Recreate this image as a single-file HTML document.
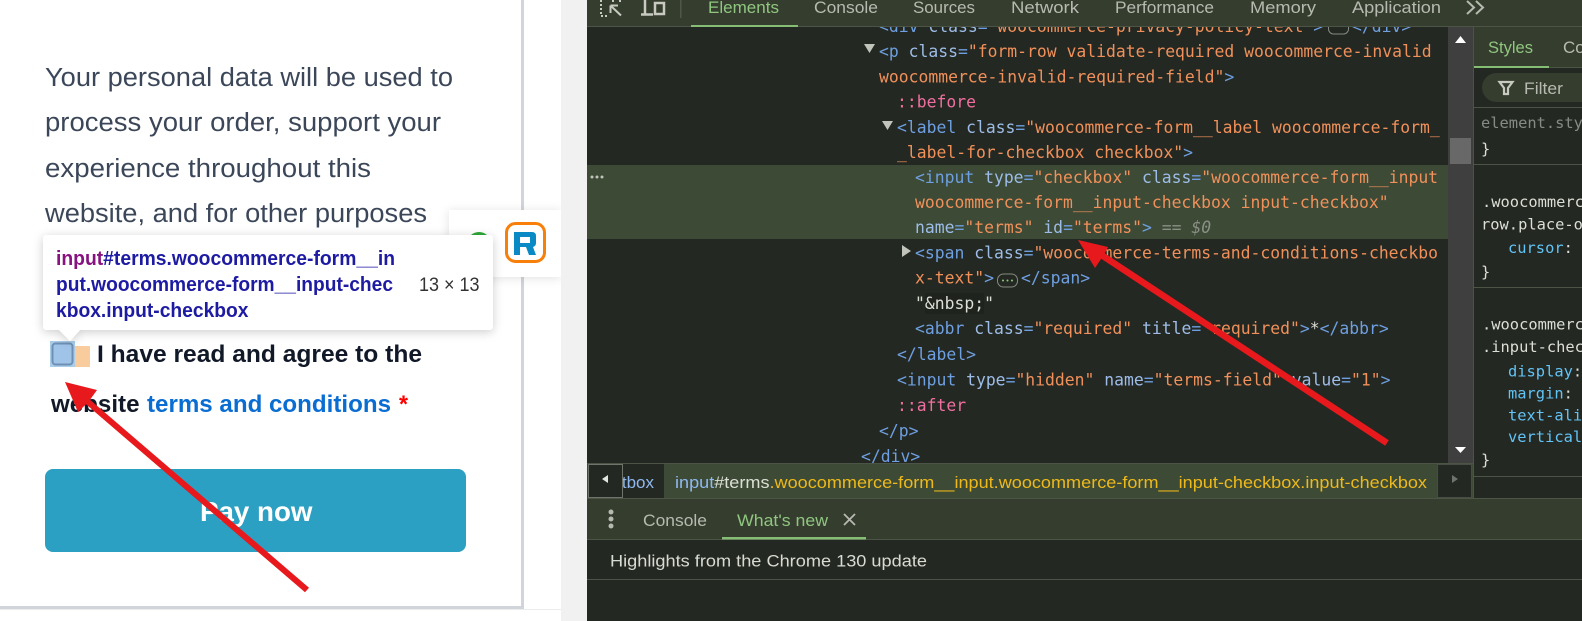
<!DOCTYPE html>
<html><head><meta charset="utf-8"><style>
html,body{margin:0;padding:0;background:#fff;width:1582px;height:621px;overflow:hidden}
svg{display:block}
text{white-space:pre}
.s{font-family:"Liberation Sans",sans-serif}
.m{font-family:"DejaVu Sans Mono","Liberation Mono",monospace;font-size:16.4px}
.y{font-family:"DejaVu Sans Mono","Liberation Mono",monospace;font-size:15.4px}
.t{fill:#6e9fe0}.a{fill:#9dbde8}.v{fill:#f0905a}.p{fill:#ee6f9f}.w{fill:#dcdfd6}.q{fill:#b6bab0}.g{fill:#90c680}
.o{fill:#62c3f5}
</style></head><body>
<svg width="1582" height="621" viewBox="0 0 1582 621" xmlns="http://www.w3.org/2000/svg">
<defs>
<filter id="sh" x="-20%" y="-30%" width="140%" height="160%"><feDropShadow dx="0" dy="2" stdDeviation="5" flood-color="#000" flood-opacity=".2"/></filter>
<filter id="sh2" x="-20%" y="-30%" width="140%" height="160%"><feDropShadow dx="0" dy="1" stdDeviation="5" flood-color="#000" flood-opacity=".12"/></filter>
</defs>
<rect width="1582" height="621" fill="#fff"/>
<!-- left page -->
<rect x="521" y="0" width="3" height="609" fill="#d1d5db"/>
<rect x="0" y="606" width="524" height="3" fill="#d1d5db"/>
<rect x="0" y="609" width="561" height="1" fill="#ececec"/>
<rect x="561" y="0" width="26" height="621" fill="#f1f1f1"/>
<g class="s" font-size="25.5" fill="#3b4759">
<text x="45" y="86" textLength="408" lengthAdjust="spacingAndGlyphs">Your personal data will be used to</text>
<text x="45" y="131" textLength="396" lengthAdjust="spacingAndGlyphs">process your order, support your</text>
<text x="45" y="177" textLength="326" lengthAdjust="spacingAndGlyphs">experience throughout this</text>
<text x="45" y="222" textLength="382" lengthAdjust="spacingAndGlyphs">website, and for other purposes</text>
</g>
<!-- widget -->
<rect x="449" y="210" width="112" height="67" fill="#fff" filter="url(#sh2)"/>
<rect x="561" y="200" width="26" height="90" fill="#f1f1f1"/>
<circle cx="479" cy="244" r="12" fill="#2fa836"/>
<rect x="506.5" y="223.5" width="38" height="38" rx="9" fill="#fff" stroke="#f77f0a" stroke-width="3"/>
<path d="M514 232H532Q536 232 536 236V243Q536 246 533 247L536 255H529L526 247H520V255H514ZM520 237V243H530V237Z" fill="#0a8ac4"/>
<!-- form -->
<rect x="50" y="341" width="25" height="26" fill="#a9cde8"/>
<rect x="75" y="346" width="15" height="21" fill="#f9cc9d"/>
<rect x="52.5" y="343.5" width="20" height="21" rx="3" fill="#a0c4e8" stroke="#6f90b5" stroke-width="2"/>
<g class="s" font-size="24.5" font-weight="700">
<text x="97" y="362" fill="#111827" textLength="325" lengthAdjust="spacingAndGlyphs">I have read and agree to the</text>
<text x="51" y="412" fill="#111827" textLength="88.5" lengthAdjust="spacingAndGlyphs">website</text>
<text x="147" y="412" fill="#0a6dd1" textLength="244" lengthAdjust="spacingAndGlyphs">terms and conditions</text>
<text x="399" y="412" fill="#f00" textLength="9" lengthAdjust="spacingAndGlyphs">*</text>
</g>
<rect x="45" y="469" width="421" height="83" rx="8" fill="#2ba0c2"/>
<text class="s" x="200" y="521" font-size="28" font-weight="700" fill="#fff" textLength="112.5" lengthAdjust="spacingAndGlyphs">Pay now</text>
<!-- tooltip -->
<g filter="url(#sh)">
<path d="M47 235H489Q493 235 493 239V326Q493 330 489 330H80L70 341L59 330H47Q43 330 43 326V239Q43 235 47 235Z" fill="#fff"/>
</g>
<g class="s" font-size="20" font-weight="700" fill="#1e1ba3">
<text x="56" y="265" textLength="339" lengthAdjust="spacingAndGlyphs"><tspan fill="#881280">input</tspan>#terms.woocommerce-form__in</text>
<text x="56" y="291" textLength="337" lengthAdjust="spacingAndGlyphs">put.woocommerce-form__input-chec</text>
<text x="56" y="317" textLength="192.5" lengthAdjust="spacingAndGlyphs">kbox.input-checkbox</text>
</g>
<text class="s" x="419" y="291" font-size="19" fill="#333" textLength="60.5" lengthAdjust="spacingAndGlyphs">13 × 13</text>

<!-- devtools -->
<rect x="587" y="0" width="995" height="621" fill="#242822"/>
<rect x="587" y="165" width="861" height="74" fill="#3c4a36"/>
<rect x="925" y="293" width="59" height="21" fill="#1f231e"/>
<g class="m">
<text x="879" y="32"><tspan class="t">&lt;div </tspan><tspan class="a">class</tspan><tspan class="t">=</tspan><tspan class="v">"woocommerce-privacy-policy-text"</tspan><tspan class="t">&gt;</tspan></text>
<rect x="1328.5" y="22" width="20" height="12" rx="5" fill="none" stroke="#858a80"/>
<text x="1352" y="32" class="t">&lt;/div&gt;</text>
<text x="879" y="57"><tspan class="t">&lt;p </tspan><tspan class="a">class</tspan><tspan class="t">=</tspan><tspan class="v">"form-row validate-required woocommerce-invalid</tspan></text>
<text x="879" y="82.3"><tspan class="v">woocommerce-invalid-required-field"</tspan><tspan class="t">&gt;</tspan></text>
<text x="897" y="107.6" class="p">::before</text>
<text x="897" y="132.9"><tspan class="t">&lt;label </tspan><tspan class="a">class</tspan><tspan class="t">=</tspan><tspan class="v">"woocommerce-form__label woocommerce-form_</tspan></text>
<text x="897" y="158.2"><tspan class="v">_label-for-checkbox checkbox"</tspan><tspan class="t">&gt;</tspan></text>
<text x="915" y="183"><tspan class="t">&lt;input </tspan><tspan class="a">type</tspan><tspan class="t">=</tspan><tspan class="v">"checkbox"</tspan> <tspan class="a">class</tspan><tspan class="t">=</tspan><tspan class="v">"woocommerce-form__input</tspan></text>
<text x="915" y="208"><tspan class="v">woocommerce-form__input-checkbox input-checkbox"</tspan></text>
<text x="915" y="233"><tspan class="a">name</tspan><tspan class="t">=</tspan><tspan class="v">"terms"</tspan> <tspan class="a">id</tspan><tspan class="t">=</tspan><tspan class="v">"terms"</tspan><tspan class="t">&gt;</tspan><tspan fill="#8b9086"> == </tspan><tspan fill="#8b9086" font-style="italic">$0</tspan></text>
<text x="915" y="258.5"><tspan class="t">&lt;span </tspan><tspan class="a">class</tspan><tspan class="t">=</tspan><tspan class="v">"woocommerce-terms-and-conditions-checkbo</tspan></text>
<text x="915" y="283.5"><tspan class="v">x-text"</tspan><tspan class="t">&gt;</tspan></text>
<rect x="997.5" y="274" width="20" height="13" rx="6" fill="none" stroke="#858a80"/>
<circle cx="1003" cy="280.5" r="1" fill="#90c680"/><circle cx="1007.5" cy="280.5" r="1" fill="#90c680"/><circle cx="1012" cy="280.5" r="1" fill="#90c680"/>
<text x="1021" y="283.5" class="t">&lt;/span&gt;</text>
<text x="915" y="308.8" class="w">"&amp;nbsp;"</text>
<text x="915" y="334.2"><tspan class="t">&lt;abbr </tspan><tspan class="a">class</tspan><tspan class="t">=</tspan><tspan class="v">"required"</tspan> <tspan class="a">title</tspan><tspan class="t">=</tspan><tspan class="v">"required"</tspan><tspan class="t">&gt;</tspan><tspan class="w">*</tspan><tspan class="t">&lt;/abbr&gt;</tspan></text>
<text x="897" y="360" class="t">&lt;/label&gt;</text>
<text x="897" y="385.5"><tspan class="t">&lt;input </tspan><tspan class="a">type</tspan><tspan class="t">=</tspan><tspan class="v">"hidden"</tspan> <tspan class="a">name</tspan><tspan class="t">=</tspan><tspan class="v">"terms-field"</tspan> <tspan class="a">value</tspan><tspan class="t">=</tspan><tspan class="v">"1"</tspan><tspan class="t">&gt;</tspan></text>
<text x="897" y="411" class="p">::after</text>
<text x="879" y="436.5" class="t">&lt;/p&gt;</text>
<text x="861" y="462" class="t">&lt;/div&gt;</text>
</g>
<path d="M864 44H875L869.5 53Z M882 121H893L887.5 130Z M902 245L911 251L902 257Z" fill="#c0c4ba"/>
<circle cx="592" cy="177" r="1.5" fill="#c0c4ba"/><circle cx="597" cy="177" r="1.5" fill="#c0c4ba"/><circle cx="602" cy="177" r="1.5" fill="#c0c4ba"/>
<!-- top bar -->
<rect x="587" y="0" width="995" height="26" fill="#353d2e"/>
<rect x="587" y="26" width="995" height="1" fill="#4c5445"/>
<rect x="691" y="25" width="107" height="2" fill="#86bd75"/>
<g fill="none" stroke="#c6cac0">
<path d="M601 0V16H609M612 1H616M619 1H622" stroke-width="2" stroke-dasharray="2 2"/>
<path d="M610.5 5.5H618M610.5 5.5V13M611 6L621 15.5" stroke-width="2"/>
<path d="M645 0V14M641 14.5H653" stroke-width="2.5"/>
<rect x="655" y="3" width="9" height="11" stroke-width="2.5"/>
</g>
<rect x="680" y="0" width="1.5" height="18" fill="#4f5749"/>
<g class="s" font-size="17">
<text x="708" y="13" class="g" textLength="71" lengthAdjust="spacingAndGlyphs">Elements</text>
<text x="814" y="13" class="q" textLength="64" lengthAdjust="spacingAndGlyphs">Console</text>
<text x="913" y="13" class="q" textLength="62" lengthAdjust="spacingAndGlyphs">Sources</text>
<text x="1011" y="13" class="q" textLength="68" lengthAdjust="spacingAndGlyphs">Network</text>
<text x="1115" y="13" class="q" textLength="99" lengthAdjust="spacingAndGlyphs">Performance</text>
<text x="1250" y="13" class="q" textLength="66" lengthAdjust="spacingAndGlyphs">Memory</text>
<text x="1352" y="13" class="q" textLength="89" lengthAdjust="spacingAndGlyphs">Application</text>
</g>
<path d="M1467 1L1474 7.5L1467 14M1476 1L1483 7.5L1476 14" fill="none" stroke="#b6bab0" stroke-width="2"/>
<!-- scrollbar -->
<rect x="1448" y="27" width="25" height="436" fill="#3f3f3f"/>
<rect x="1450" y="138" width="21" height="26" fill="#686868"/>
<path d="M1460.5 36L1466 43H1455Z M1455 447H1466L1460.5 453Z" fill="#fff"/>
<!-- side pane -->
<rect x="1473" y="27" width="1" height="472" fill="#4c5445"/>
<rect x="1474" y="27" width="108" height="40" fill="#353d2e"/>
<rect x="1474" y="66" width="75" height="2" fill="#86bd75"/>
<rect x="1549" y="67" width="33" height="1" fill="#4c5445"/>
<text class="s g" x="1488" y="53" font-size="17" textLength="45" lengthAdjust="spacingAndGlyphs">Styles</text>
<text class="s q" x="1563" y="53" font-size="17">Co</text>
<path d="M1482 87.500a14.500 14.500 0 0 1 14.500-14.500H1582V102H1496.500a14.500 14.500 0 0 1-14.500-14.500Z" fill="#353d2e"/>
<path d="M1499.500 82H1512.500L1508 88V94H1504V88Z" fill="none" stroke="#c6cac0" stroke-width="2.200"/>
<text class="s q" x="1524" y="94" font-size="17" textLength="39" lengthAdjust="spacingAndGlyphs">Filter</text>
<rect x="1474" y="107" width="108" height="1" fill="#4c5445"/>
<g class="y">
<text x="1481" y="128" fill="#868b86">element.style</text>
<text x="1481" y="154" class="w">}</text>
<text x="1482" y="207" class="w">.woocommerce</text>
<text x="1481" y="229.500" class="w">row.place-order</text>
<text x="1508" y="253"><tspan class="o">cursor</tspan><tspan class="w">:</tspan></text>
<text x="1481" y="277" class="w">}</text>
<text x="1482" y="329.500" class="w">.woocommerce</text>
<text x="1482" y="352" class="w">.input-checkbox</text>
<text x="1508" y="376.500"><tspan class="o">display</tspan><tspan class="w">:</tspan></text>
<text x="1508" y="398.500"><tspan class="o">margin</tspan><tspan class="w">:</tspan></text>
<text x="1508" y="420.500" class="o">text-align</text>
<text x="1508" y="442" class="o">vertical</text>
<text x="1481" y="465" class="w">}</text>
</g>
<rect x="1474" y="164" width="108" height="1" fill="#4c5445"/>
<rect x="1474" y="287" width="108" height="1" fill="#4c5445"/>
<rect x="1474" y="476" width="108" height="1" fill="#4c5445"/>
<!-- breadcrumbs -->
<rect x="587" y="463" width="886" height="35" fill="#3c4a36"/>
<rect x="587" y="463" width="886" height="1" fill="#4c5445"/>
<rect x="623" y="464" width="41" height="34" fill="#242822"/>
<text class="s" x="654" y="488" font-size="17" fill="#8fb8f0" text-anchor="end">tbox</text>
<rect x="588.500" y="464.500" width="34" height="33" fill="#242822" stroke="#70756b"/>
<path d="M608 475V483L602 479Z" fill="#e4e6e0"/>
<text class="s" x="675" y="488" font-size="17" textLength="752" lengthAdjust="spacingAndGlyphs" fill="#eeb91a"><tspan fill="#8fb8f0">input</tspan><tspan fill="#dcdfd6">#terms</tspan>.woocommerce-form__input.woocommerce-form__input-checkbox.input-checkbox</text>
<rect x="1437.500" y="464.500" width="34" height="33" fill="#242822" stroke="#474d42"/>
<path d="M1452 475L1458 479L1452 483Z" fill="#6f736b"/>
<!-- drawer -->
<rect x="587" y="498" width="995" height="41" fill="#353d2e"/>
<rect x="587" y="498" width="995" height="1" fill="#4c5445"/>
<rect x="587" y="539" width="995" height="1" fill="#4c5445"/>
<circle cx="611" cy="512" r="2.500" fill="#b6bab0"/><circle cx="611" cy="519" r="2.500" fill="#b6bab0"/><circle cx="611" cy="526" r="2.500" fill="#b6bab0"/>
<text class="s q" x="643" y="526" font-size="17" textLength="64" lengthAdjust="spacingAndGlyphs">Console</text>
<text class="s g" x="737" y="526" font-size="17" textLength="91" lengthAdjust="spacingAndGlyphs">What's new</text>
<path d="M844 514L855 525M855 514L844 525" stroke="#b6bab0" stroke-width="1.800" fill="none"/>
<rect x="722" y="537" width="144" height="2.500" fill="#86bd75"/>
<text class="s" x="610" y="566.500" font-size="17" fill="#d8dbd2" textLength="317" lengthAdjust="spacingAndGlyphs">Highlights from the Chrome 130 update</text>
<rect x="587" y="579" width="995" height="1" fill="#4c5445"/>
<!-- arrows -->
<g fill="#e8191c">
<path d="M65 382L97 390L90 399.700L309 587.700L305 592.300L86 404.300L78 412Z"/>
<path d="M1078 240L1108 247L1104.800 253.300L1388.800 440.300L1385.200 445.800L1101.200 258.800L1095 268Z"/>
</g>
</svg>
</body></html>
